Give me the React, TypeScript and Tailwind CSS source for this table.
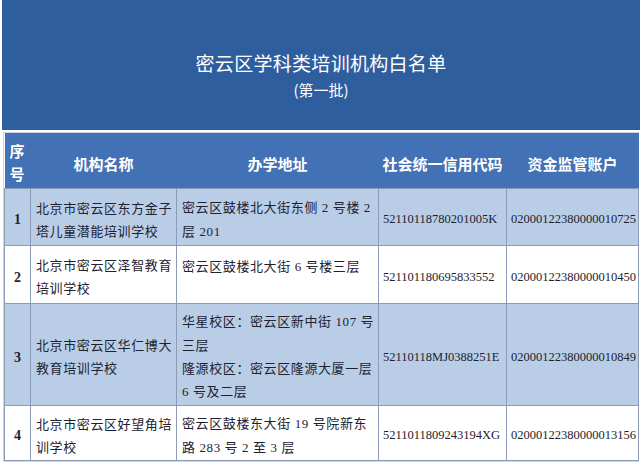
const rows = [
  {
    no: '1',
    name: ['北京市密云区东方金子', '塔儿童潜能培训学校'],
    addr: ['密云区鼓楼北大街东侧 2 号楼 2', '层 201'],
    code: '52110118780201005K',
    account: '02000122380000010725',
    shade: true,
    top: false,
    h: 'h-[57px]',
  },
  {
    no: '2',
    name: ['北京市密云区泽智教育', '培训学校'],
    addr: ['密云区鼓楼北大街 6 号楼三层'],
    code: '521101180695833552',
    account: '02000122380000010450',
    shade: false,
    top: true,
    h: 'h-[58px]',
  },
  {
    no: '3',
    name: ['北京市密云区华仁博大', '教育培训学校'],
    addr: ['华星校区：密云区新中街 107 号', '三层', '隆源校区：密云区隆源大厦一层', '6 号及二层'],
    code: '52110118MJ0388251E',
    account: '02000122380000010849',
    shade: true,
    top: false,
    h: 'h-[102px]',
  },
  {
    no: '4',
    name: ['北京市密云区好望角培', '训学校'],
    addr: ['密云区鼓楼东大街 19 号院新东', '路 283 号 2 至 3 层'],
    code: '5211011809243194XG',
    account: '02000122380000013156',
    shade: false,
    top: false,
    h: 'h-[55px]',
  },
];

const headers = ['机构名称', '办学地址', '社会统一信用代码', '资金监管账户'];

export default function App() {
  return (
    <div className="w-[640px] h-[466px] bg-white overflow-hidden font-['Liberation_Serif','Noto_Sans_CJK_SC',serif]">
      {/* Banner */}
      <div className="ml-[2px] h-[130px] bg-[#2f5e9f] flex flex-col items-center pt-[49px] text-white font-['Noto_Sans_CJK_SC',sans-serif]">
        <div className="text-[19px] leading-[28px] tracking-[0.3px]">密云区学科类培训机构白名单</div>
        <div className="text-[15px] leading-[22px] mt-[2px]">(第一批)</div>
      </div>

      {/* Table */}
      <div className="mt-[2px] ml-[3px] w-[636px] border border-[#c9d6ea]">
        <table className="table-fixed border-collapse w-[634px]">
          <colgroup>
            <col className="w-[26px]" />
            <col className="w-[146px]" />
            <col className="w-[202px]" />
            <col className="w-[128px]" />
            <col className="w-[132px]" />
          </colgroup>
          <thead>
            <tr className="h-[55px] bg-[#4371b5] text-white font-['Noto_Sans_CJK_SC',sans-serif] font-bold">
              <th className="text-[15px] leading-[23px] text-left pl-[5px] pt-[4px] align-middle">
                序<br />号
              </th>
              {headers.map((h) => (
                <th key={h} className="text-[15px] leading-[20px] text-center pt-[8px] align-middle">
                  {h}
                </th>
              ))}
            </tr>
          </thead>
          <tbody className="text-[#1e2230]">
            {rows.map((r) => (
              <tr key={r.no} className={`${r.h} ${r.shade ? 'bg-[#b9cde6]' : 'bg-white'}`}>
                <td className="border border-[#8c9cb6] text-center align-middle pt-[6px] text-[14px] font-bold">{r.no}</td>
                <td className="border border-[#8c9cb6] align-middle pl-[5px] pt-[6px] text-[13px] leading-[23px] tracking-[0.6px]">
                  {r.name.map((l) => (
                    <div key={l} className="whitespace-nowrap">{l}</div>
                  ))}
                </td>
                <td
                  className={`border border-[#8c9cb6] pl-[5px] text-[13px] leading-[23.4px] tracking-[0.6px] ${
                    r.top ? 'align-top pt-[9px]' : 'align-middle pt-[6px]'
                  }`}
                >
                  {r.addr.map((l) => (
                    <div key={l} className="whitespace-nowrap">{l}</div>
                  ))}
                </td>
                <td className="border border-[#8c9cb6] align-middle pl-[4px] pt-[6px] text-[12.5px] whitespace-nowrap">{r.code}</td>
                <td className="border border-[#8c9cb6] align-middle pl-[4px] pt-[6px] text-[12.5px] whitespace-nowrap">{r.account}</td>
              </tr>
            ))}
          </tbody>
        </table>
      </div>
    </div>
  );
}
